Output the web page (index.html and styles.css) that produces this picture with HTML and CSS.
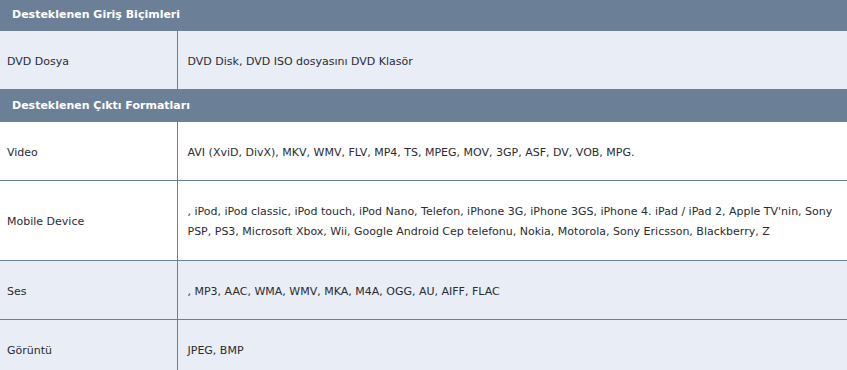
FILE: index.html
```html
<!DOCTYPE html>
<html lang="tr">
<head>
<meta charset="utf-8">
<link rel="stylesheet" href="styles.css">
</head>
<body>
<table class="spec">
  <colgroup><col class="c1"><col class="c2"></colgroup>
  <tr class="head"><th colspan="2">Desteklenen Giriş Biçimleri</th></tr>
  <tr class="alt"><td class="label">DVD Dosya</td><td class="val">DVD Disk, DVD ISO dosyasını DVD Klasör</td></tr>
  <tr class="head head2"><th colspan="2">Desteklenen Çıktı Formatları</th></tr>
  <tr><td class="label">Video</td><td class="val">AVI (XviD, DivX), MKV, WMV, FLV, MP4, TS, MPEG, MOV, 3GP, ASF, DV, VOB, MPG.</td></tr>
  <tr class="tall"><td class="label">Mobile Device</td><td class="val">, iPod, iPod classic, iPod touch, iPod Nano, Telefon, iPhone 3G, iPhone 3GS, iPhone 4. iPad / iPad 2, Apple TV'nin, Sony<br>PSP, PS3, Microsoft Xbox, Wii, Google Android Cep telefonu, Nokia, Motorola, Sony Ericsson, Blackberry, Z</td></tr>
  <tr class="alt"><td class="label">Ses</td><td class="val">, MP3, AAC, WMA, WMV, MKA, M4A, OGG, AU, AIFF, FLAC</td></tr>
  <tr class="alt"><td class="label">Görüntü</td><td class="val">JPEG, BMP</td></tr>
</table>
</body>
</html>
```
FILE: styles.css
```css
html, body {
  margin: 0;
  padding: 0;
  background: #ffffff;
}
.spec {
  width: 847px;
  border-collapse: collapse;
  font-family: "DejaVu Sans", Verdana, sans-serif;
  font-size: 11px;
  color: #2b2b33;
}
.c1 { width: 177px; }
.head th {
  background: #6b7f97;
  color: #ffffff;
  font-weight: bold;
  text-align: left;
  height: 30px;
  padding: 0 12px;
  line-height: 20px;
}
.head2 th {
  height: 31px;
}
.spec td {
  border-top: 1px solid #6b7f97;
  border-bottom: 1px solid #6b7f97;
  height: 55px;
  line-height: 20px;
  padding: 3px 0 0 0;
  vertical-align: middle;
  white-space: nowrap;
}
.spec td.label {
  padding-left: 7px;
  border-right: 1px solid #6b7f97;
}
.spec td.val {
  padding-left: 10px;
}
.alt td { background: #e9edf5; }
.tall td { height: 76px; }
```
